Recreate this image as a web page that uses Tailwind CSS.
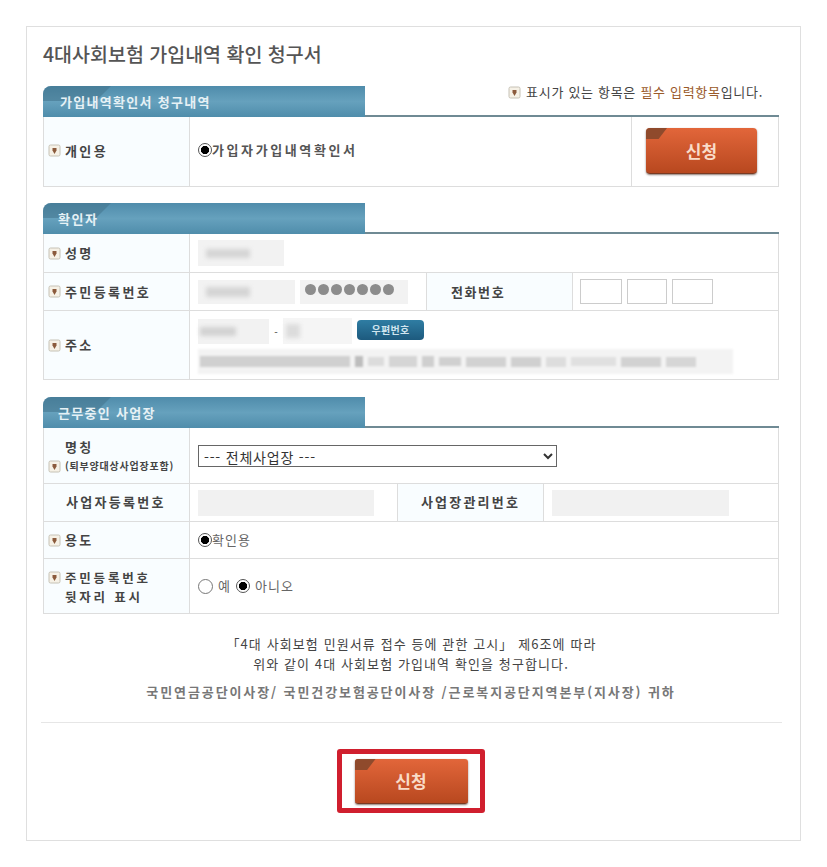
<!DOCTYPE html>
<html lang="ko">
<head>
    <meta charset="UTF-8">
    <meta name="viewport" content="width=device-width, initial-scale=1.0">
    <title>4대사회보험 가입내역 확인 청구서</title>
    <script src="https://cdn.jsdelivr.net/npm/@tailwindcss/browser@4"></script>
</head>
<body class="bg-white h-[867px] w-[827px] overflow-hidden font-['Noto_Sans_CJK_KR','Noto_Sans',sans-serif] text-[#444]">
<svg class="hidden">
    <symbol id="req" viewBox="0 0 13 13">
        <rect x="1" y="1" width="11" height="11" rx="1.5" fill="#f6f1e6" stroke="#c6c2b6"/>
        <path d="M4.5 4h4v2.5L6.5 10 4.5 6.5z" fill="#8b5a3c"/>
    </symbol>
</svg>
<div class="mx-[26px] mt-[26px] w-[775px] h-[815px] border border-[#dfdfdf] px-4 relative">
    <h1 class="mt-[14px] h-[26px] leading-[26px] text-[19.5px] text-[#555] font-medium">4대사회보험 가입내역 확인 청구서</h1>

    <!-- 청구내역 -->
    <div class="mt-[19px] w-[736px] h-[31px] flex border-b-2 border-[#6f8a94] relative">
        <div class="relative w-[322px] h-[31px] rounded-tl-lg overflow-hidden bg-gradient-to-b from-[#4f8cab] via-[#66a1bd] to-[#4f8dab] text-[#e6f1f5] text-[13px] font-bold leading-[31px] pl-[17px]">
            <div class="absolute left-0 top-0 w-[68px] h-[15px] bg-[#3f7088] [clip-path:polygon(0_0,100%_0,78%_100%,0_100%)] opacity-50"></div>
            <span class="relative tracking-[1.3px]">가입내역확인서 청구내역</span>
        </div>
        <p class="absolute right-[16px] top-[-2px] flex items-center gap-[5px] text-[13px] tracking-[0.7px] text-[#444] leading-[16px]">
            <svg class="w-[13px] h-[13px]"><use href="#req"/></svg>
            <span>표시가 있는 항목은 <b class="font-normal text-[#9a5a2a]">필수 입력항목</b>입니다.</span>
        </p>
    </div>
    <div class="w-[736px] h-[70px] flex border-x border-b border-[#ddd]">
        <div class="w-[146px] bg-[#f9fdff] border-r border-[#ddd] flex items-center gap-[4px] pl-[4px] pb-[2px] text-[13px] font-bold tracking-[2.4px]">
            <svg class="w-[13px] h-[13px]"><use href="#req"/></svg>개인용
        </div>
        <div class="w-[441px] flex items-center pl-2 pb-[4px] text-[13px] font-bold text-[#555] tracking-[2.6px]">
            <input type="radio" checked class="appearance-none w-[14px] h-[14px] rounded-full border border-[#555] bg-[radial-gradient(circle,#000_0,#000_45%,#fff_52%)]">가입자가입내역확인서
        </div>
        <div class="flex-1 border-l border-[#ddd] flex items-center pl-[14px] pb-[1px]">
            <button class="relative overflow-hidden w-[111px] h-[46px] rounded-[4px] bg-gradient-to-b from-[#e2663a] to-[#b8481f] border-b border-[#7a3a22] shadow-[0_1px_2px_rgba(60,30,20,0.6)] text-[#f9dcc8] text-[17px] font-bold">
                <span class="absolute left-0 top-0 w-[21px] h-[11px] bg-[#8f4a2c] [clip-path:polygon(0_0,100%_0,60%_100%,0_100%)]"></span>신청
            </button>
        </div>
    </div>

    <!-- 확인자 -->
    <div class="mt-[16px] w-[736px] h-[31px] border-b-2 border-[#6f8a94]">
        <div class="relative w-[322px] h-[31px] rounded-tl-lg overflow-hidden bg-gradient-to-b from-[#4f8cab] via-[#66a1bd] to-[#4f8dab] text-[#e6f1f5] text-[13px] font-bold leading-[31px] pl-[15px]">
            <div class="absolute left-0 top-0 w-[68px] h-[15px] bg-[#3f7088] [clip-path:polygon(0_0,100%_0,78%_100%,0_100%)] opacity-50"></div>
            <span class="relative tracking-[1.5px]">확인자</span>
        </div>
    </div>
    <div class="w-[736px] border-x border-[#ddd] text-[13px]">
        <div class="h-[39px] flex border-b border-[#ddd]">
            <div class="w-[146px] bg-[#f9fdff] border-r border-[#ddd] flex items-center gap-[4px] pl-[4px] font-bold tracking-[2.4px]">
                <svg class="w-[13px] h-[13px]"><use href="#req"/></svg>성명
            </div>
            <div class="flex items-center pl-2">
                <div class="w-[86px] h-[26px] bg-[#f2f2f2] flex items-center pl-2"><span class="w-[44px] h-[9px] bg-[#d5d5d5] blur-[2px]"></span></div>
            </div>
        </div>
        <div class="h-[38px] flex border-b border-[#ddd]">
            <div class="w-[146px] bg-[#f9fdff] border-r border-[#ddd] flex items-center gap-[4px] pl-[4px] font-bold tracking-[2.4px]">
                <svg class="w-[13px] h-[13px]"><use href="#req"/></svg>주민등록번호
            </div>
            <div class="w-[236px] flex items-center gap-[5px] pl-2">
                <div class="w-[97px] h-[24px] bg-[#f2f2f2] flex items-center pl-2"><span class="w-[44px] h-[10px] bg-[#d5d5d5] blur-[2px]"></span></div>
                <div class="w-[108px] h-[24px] bg-[#f2f2f2] flex items-center pl-[5px] gap-[2px] pb-[4px]">
                    <span class="w-[11px] h-[11px] rounded-full bg-[#8c8c8c]"></span><span class="w-[11px] h-[11px] rounded-full bg-[#8c8c8c]"></span><span class="w-[11px] h-[11px] rounded-full bg-[#8c8c8c]"></span><span class="w-[11px] h-[11px] rounded-full bg-[#8c8c8c]"></span><span class="w-[11px] h-[11px] rounded-full bg-[#8c8c8c]"></span><span class="w-[11px] h-[11px] rounded-full bg-[#8c8c8c]"></span><span class="w-[11px] h-[11px] rounded-full bg-[#8c8c8c]"></span>
                </div>
            </div>
            <div class="w-[147px] bg-[#f9fdff] border-x border-[#ddd] flex items-center pl-[24px] font-bold tracking-[1.6px]">전화번호</div>
            <div class="flex items-center gap-[5px] pl-[7px]">
                <span class="w-[42px] h-[25px] border border-[#ccc] bg-white"></span>
                <span class="w-[40px] h-[25px] border border-[#ccc] bg-white"></span>
                <span class="w-[41px] h-[25px] border border-[#ccc] bg-white"></span>
            </div>
        </div>
        <div class="h-[69px] flex border-b border-[#ddd]">
            <div class="w-[146px] bg-[#f9fdff] border-r border-[#ddd] flex items-center gap-[4px] pl-[4px] font-bold tracking-[2.4px]">
                <svg class="w-[13px] h-[13px]"><use href="#req"/></svg>주소
            </div>
            <div class="flex-1 pl-2 pt-[7px]">
                <div class="flex items-center h-[26px]">
                    <div class="w-[71px] h-[25px] bg-[#f2f2f2] flex items-center pl-[2px]"><span class="w-[36px] h-[9px] bg-[#d2d2d2] blur-[2px]"></span></div>
                    <span class="w-[14px] text-center text-[10px]">-</span>
                    <div class="w-[69px] h-[26px] bg-[#f5f5f5] flex items-center pl-[3px]"><span class="w-[14px] h-[14px] bg-[#dcdcdc] blur-[2px]"></span></div>
                    <button class="ml-[5px] mb-[3px] w-[67px] h-[20px] rounded-[4px] bg-gradient-to-b from-[#2f7da3] to-[#1d5a7e] text-[#cfe4ee] text-[10px] tracking-[0.3px] font-bold leading-[20px]">우편번호</button>
                </div>
                <div class="mt-[5px] w-[535px] h-[25px] bg-[#f3f3f3] flex items-center gap-[5px] px-[2px] blur-[1px]">
                    <span class="w-[150px] h-[11px] bg-[#d0d0d0]"></span>
                    <span class="w-[8px] h-[11px] bg-[#bdbdbd]"></span>
                    <span class="w-[16px] h-[9px] bg-[#dcdcdc]"></span>
                    <span class="w-[28px] h-[11px] bg-[#d5d5d5]"></span>
                    <span class="w-[12px] h-[11px] bg-[#cfcfcf]"></span>
                    <span class="w-[22px] h-[9px] bg-[#d0d0d0]"></span>
                    <span class="w-[40px] h-[10px] bg-[#d2d2d2]"></span>
                    <span class="w-[30px] h-[10px] bg-[#d0d0d0]"></span>
                    <span class="w-[20px] h-[10px] bg-[#dddddd]"></span>
                    <span class="w-[45px] h-[9px] bg-[#e0e0e0]"></span>
                    <span class="w-[40px] h-[10px] bg-[#d2d2d2]"></span>
                    <span class="w-[30px] h-[10px] bg-[#d6d6d6]"></span>
                </div>
            </div>
        </div>
    </div>

    <!-- 근무중인 사업장 -->
    <div class="mt-[17px] w-[736px] h-[31px] border-b-2 border-[#6f8a94]">
        <div class="relative w-[322px] h-[31px] rounded-tl-lg overflow-hidden bg-gradient-to-b from-[#4f8cab] via-[#66a1bd] to-[#4f8dab] text-[#e6f1f5] text-[13px] font-bold leading-[31px] pl-[15px]">
            <div class="absolute left-0 top-0 w-[68px] h-[15px] bg-[#3f7088] [clip-path:polygon(0_0,100%_0,78%_100%,0_100%)] opacity-50"></div>
            <span class="relative tracking-[1.3px]">근무중인 사업장</span>
        </div>
    </div>
    <div class="w-[736px] border-x border-[#ddd] text-[13px]">
        <div class="h-[56px] flex border-b border-[#ddd]">
            <div class="w-[146px] bg-[#f9fdff] border-r border-[#ddd] flex items-end gap-[4px] pl-[4px] pb-[10px] font-bold">
                <svg class="w-[13px] h-[13px]"><use href="#req"/></svg>
                <div>
                    <p class="tracking-[2.4px] leading-[19px] mb-[2px]">명칭</p>
                    <p class="text-[10px] tracking-[0.8px] leading-[15px] whitespace-nowrap">(퇴부양대상사업장포함)</p>
                </div>
            </div>
            <div class="flex items-center pl-2 pt-[1px]">
                <select class="w-[359px] h-[22px] bg-white border border-[#666] text-[14px] text-[#333] tracking-[0.8px] pl-[1px]">
                    <option>--- 전체사업장 ---</option>
                </select>
            </div>
        </div>
        <div class="h-[38px] flex border-b border-[#ddd]">
            <div class="w-[146px] bg-[#f9fdff] border-r border-[#ddd] flex items-center pl-[22px] pb-[1px] font-bold tracking-[2.3px] whitespace-nowrap">사업자등록번호</div>
            <div class="w-[207px] flex items-center pl-2"><span class="w-[176px] h-[26px] bg-[#f1f1f1]"></span></div>
            <div class="w-[147px] bg-[#f9fdff] border-x border-[#ddd] flex items-center justify-center pb-[1px] font-bold tracking-[2.2px] whitespace-nowrap">사업장관리번호</div>
            <div class="flex items-center pl-2"><span class="w-[177px] h-[26px] bg-[#f1f1f1]"></span></div>
        </div>
        <div class="h-[37px] flex border-b border-[#ddd]">
            <div class="w-[146px] bg-[#f9fdff] border-r border-[#ddd] flex items-center gap-[4px] pl-[4px] font-bold tracking-[2.4px]">
                <svg class="w-[13px] h-[13px]"><use href="#req"/></svg>용도
            </div>
            <div class="flex items-center pl-2 text-[#666] tracking-[1px]">
                <input type="radio" checked class="appearance-none w-[14px] h-[14px] rounded-full border border-[#555] bg-[radial-gradient(circle,#000_0,#000_45%,#fff_52%)]">확인용
            </div>
        </div>
        <div class="h-[55px] flex border-b border-[#ddd]">
            <div class="w-[146px] bg-[#f9fdff] border-r border-[#ddd] flex gap-[4px] pl-[4px] pt-[9px] font-bold text-[12.5px] tracking-[2.8px] leading-[19px]">
                <svg class="w-[13px] h-[13px] mt-[3px] shrink-0"><use href="#req"/></svg>
                <div class="whitespace-nowrap">주민등록번호<br>뒷자리 표시</div>
            </div>
            <div class="flex items-center pl-2 text-[#666] tracking-[1px] gap-[5px]">
                <input type="radio" class="appearance-none w-[15px] h-[15px] rounded-full border border-[#777] bg-white">예
                <input type="radio" checked class="appearance-none w-[14px] h-[14px] rounded-full border border-[#555] bg-[radial-gradient(circle,#000_0,#000_45%,#fff_52%)]">아니오
            </div>
        </div>
    </div>

    <!-- 고시 문구 -->
    <div class="w-[736px] text-center mt-[20px] text-[13px] text-[#444] tracking-[1.1px]">
        <p class="h-[20px] leading-[20px] pl-[1px]">「4대 사회보험 민원서류 접수 등에 관한 고시」 제6조에 따라</p>
        <p class="h-[20px] leading-[20px]">위와 같이 4대 사회보험 가입내역 확인을 청구합니다.</p>
        <p class="mt-[8px] h-[20px] leading-[20px] font-bold text-[#777] tracking-[1.9px] whitespace-nowrap">국민연금공단이사장/ 국민건강보험공단이사장 /근로복지공단지역본부(지사장) 귀하</p>
    </div>
    <div class="mt-[20px] -mx-[2px] w-[741px] border-t border-[#e6e6e6]"></div>
    <div class="w-[736px] flex justify-center mt-[26px]">
        <div class="w-[148px] h-[64px] border-[5px] border-[#d01f2e] rounded-[3px] flex items-start justify-center pt-[5px]">
            <button class="relative overflow-hidden w-[113px] h-[45px] rounded-[3px] bg-gradient-to-b from-[#e2663a] to-[#b8481f] border-b border-[#7a3a22] shadow-[0_1px_2px_rgba(60,30,20,0.6)] text-[#f9dcc8] text-[17px] font-bold">
                <span class="absolute left-0 top-0 w-[21px] h-[11px] bg-[#8f4a2c] [clip-path:polygon(0_0,100%_0,60%_100%,0_100%)]"></span>신청
            </button>
        </div>
    </div>
</div>
</body>
</html>
